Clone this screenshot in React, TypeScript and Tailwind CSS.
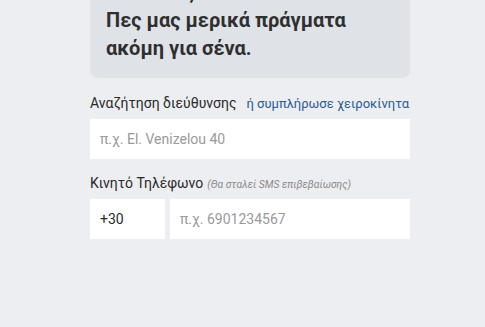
export default function App() {
  return (
    <div className="min-h-[327px] w-full bg-[#edeef1] overflow-hidden" style={{ fontFamily: 'Roboto, "Noto Sans", sans-serif' }}>
      <div className="ml-[90px] w-[320px]">
        <div className="-mt-[22px] rounded-lg bg-[#dfe2e7] px-4 pb-4">
          <p className="text-[20px] font-bold leading-[28px] text-[#2f2f2f]">
            Καλά νέα,
            <br />
            Πες μας μερικά πράγματα
            <br />
            ακόμη για σένα.
          </p>
        </div>
        <div className="mt-[15px] flex items-baseline gap-[10px]">
          <span className="text-[14px] leading-[20px] text-[#2a2a2a]">Αναζήτηση διεύθυνσης</span>
          <span className="text-[13px] leading-[20px] text-[#2b5a94]">ή συμπλήρωσε χειροκίνητα</span>
        </div>
        <div className="mt-[5px] flex h-[40px] items-center bg-white px-[10px]">
          <span className="text-[14px] text-[#9a9a9a]">π.χ. El. Venizelou 40</span>
        </div>
        <div className="mt-[14px] flex items-baseline gap-[4px]">
          <span className="text-[14px] leading-[20px] text-[#2a2a2a]">Κινητό Τηλέφωνο</span>
          <span className="text-[10.3px] italic text-[#8a8a8a]">(Θα σταλεί SMS επιβεβαίωσης)</span>
        </div>
        <div className="mt-[6px] flex gap-[5px]">
          <div className="flex h-[40px] w-[75px] items-center bg-white px-[10px] text-[14px] text-[#2a2a2a]">+30</div>
          <div className="flex h-[40px] flex-1 items-center bg-white px-[10px] text-[14px] text-[#9a9a9a]">π.χ. 6901234567</div>
        </div>
      </div>
    </div>
  );
}
